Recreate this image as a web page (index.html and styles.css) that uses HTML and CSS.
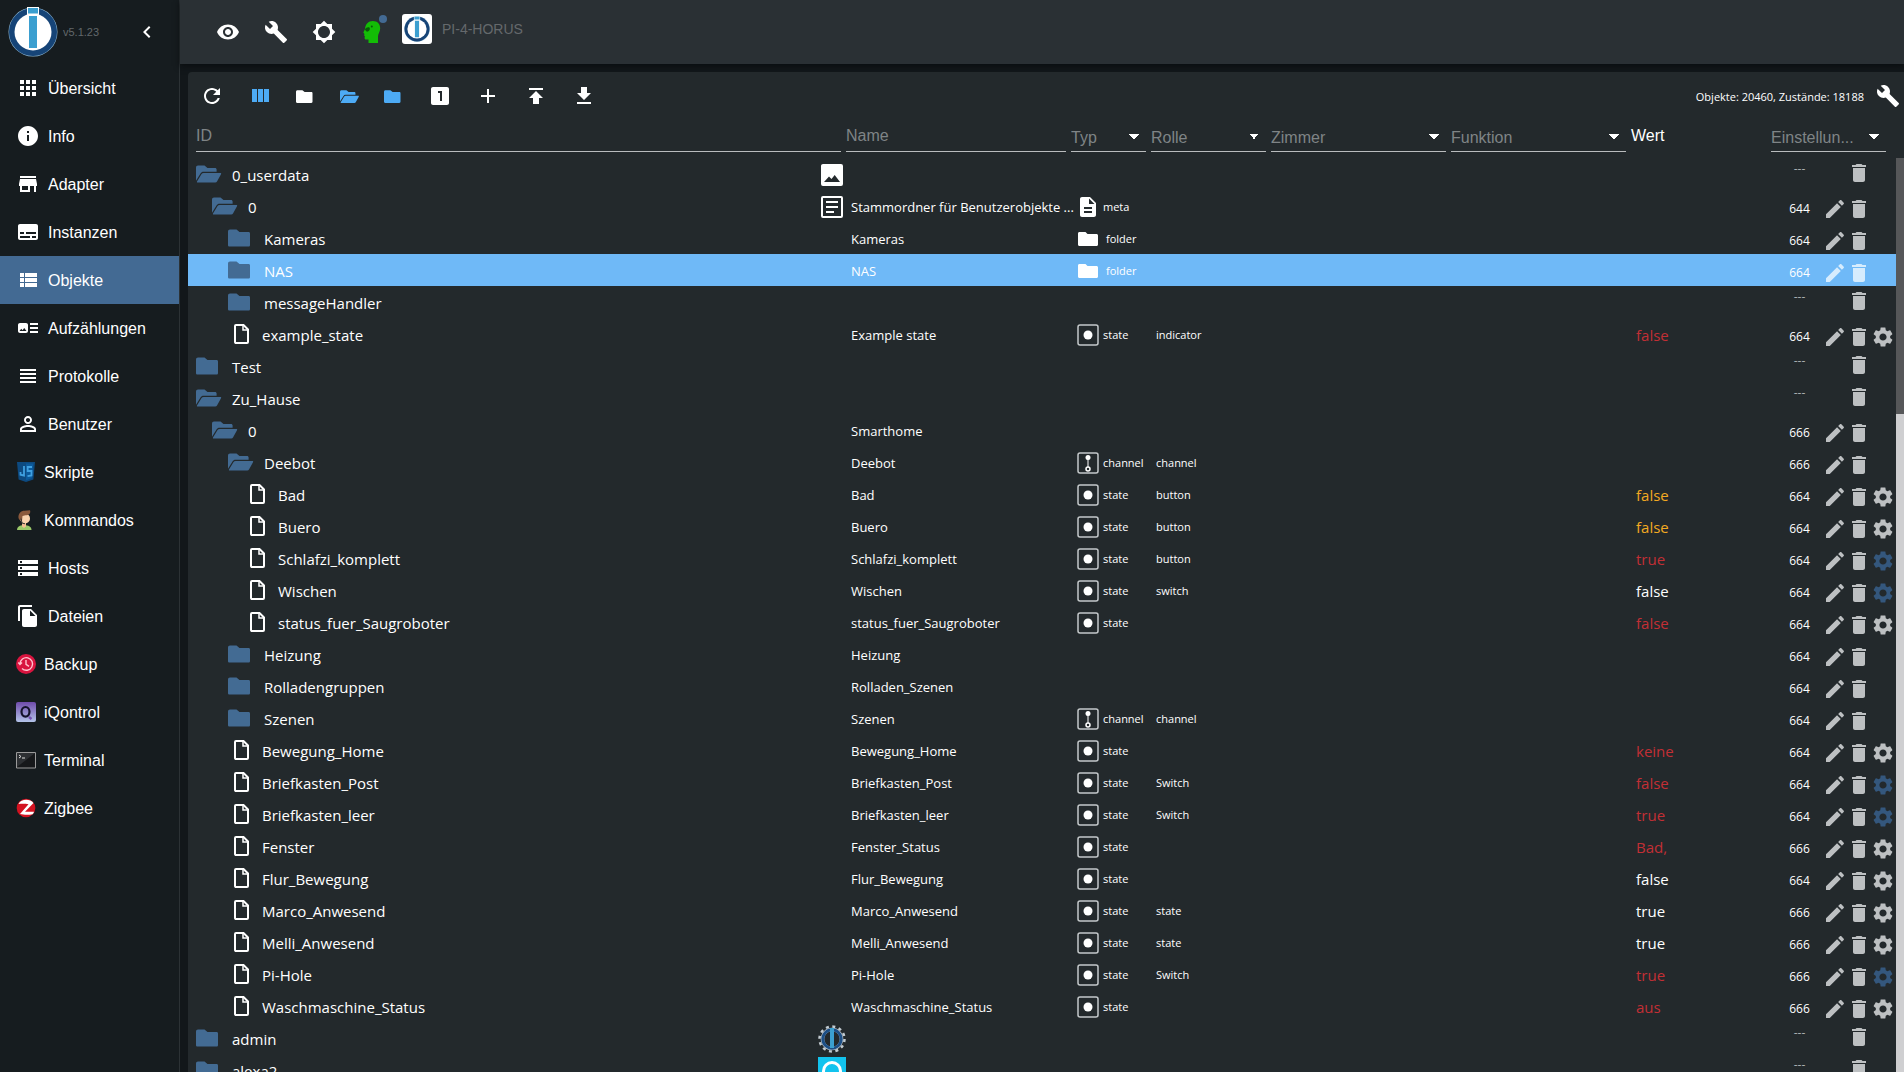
FILE: index.html
```html
<!DOCTYPE html>
<html lang="de">
<head>
<meta charset="utf-8">
<title>Objekte - ioBroker</title>
<link rel="stylesheet" href="styles.css">
</head>
<body>
<svg class="sprite" aria-hidden="true">
  <symbol id="logo" viewBox="0 0 50 50">
    <circle cx="25" cy="25" r="24.5" fill="#8fb6cf"/>
    <circle cx="25" cy="25" r="24" fill="#164477"/>
    <circle cx="25" cy="25" r="18.5" fill="#fff"/>
    <path d="M19 0h12v8H19z" fill="#fff"/>
    <path d="M20 1h10v5.500H20zM21 9h8v32h-8z" fill="#3b9fd0"/>
  </symbol>
  <symbol id="chevron" viewBox="0 0 24 24"><path d="M15.410 7.410L14 6l-6 6 6 6 1.410-1.410L10.830 12z"/></symbol>
  <symbol id="apps" viewBox="0 0 24 24"><path d="M4 8h4V4H4v4zm6 12h4v-4h-4v4zm-6 0h4v-4H4v4zm0-6h4v-4H4v4zm6 0h4v-4h-4v4zm6-10v4h4V4h-4zm-6 4h4V4h-4v4zm6 6h4v-4h-4v4zm0 6h4v-4h-4v4z"/></symbol>
  <symbol id="info" viewBox="0 0 24 24"><path d="M12 2C6.480 2 2 6.480 2 12s4.480 10 10 10 10-4.480 10-10S17.520 2 12 2zm1 15h-2v-6h2v6zm0-8h-2V7h2v2z"/></symbol>
  <symbol id="store" viewBox="0 0 24 24"><path d="M20 4H4v2h16V4zm1 10v-2l-1-5H4l-1 5v2h1v6h10v-6h4v6h2v-6h1zm-9 4H6v-4h6v4z"/></symbol>
  <symbol id="subtitles" viewBox="0 0 24 24"><path d="M20 4H4c-1.100 0-2 .9-2 2v12c0 1.100.9 2 2 2h16c1.100 0 2-.9 2-2V6c0-1.100-.9-2-2-2zM4 12h4v2H4v-2zm10 6H4v-2h10v2zm6 0h-4v-2h4v2zm0-4H10v-2h10v2z"/></symbol>
  <symbol id="viewlist" viewBox="0 0 24 24"><path d="M4 14h4v-4H4v4zm0 5h4v-4H4v4zM4 9h4V5H4v4zm5 5h12v-4H9v4zm0 5h12v-4H9v4zM9 5v4h12V5H9z"/></symbol>
  <symbol id="arttrack" viewBox="0 0 24 24"><path d="M22 13h-8v-2h8v2zm0-6h-8v2h8V7zm-8 10h8v-2h-8v2zm-2-8v6c0 1.100-.9 2-2 2H4c-1.100 0-2-.9-2-2V9c0-1.100.9-2 2-2h6c1.100 0 2 .9 2 2zm-1.500 6l-2.250-3-1.750 2.260-1.250-1.510L3.500 15h7z"/></symbol>
  <symbol id="headline" viewBox="0 0 24 24"><path d="M4 15h16v-2H4v2zm0 4h16v-2H4v2zm0-8h16V9H4v2zm0-6v2h16V5H4z"/></symbol>
  <symbol id="person" viewBox="0 0 24 24"><path d="M12 5.900c1.160 0 2.100.94 2.100 2.100s-.94 2.100-2.100 2.100S9.900 9.160 9.900 8s.94-2.100 2.100-2.100m0 9c2.970 0 6.100 1.460 6.100 2.100v1.100H5.900V17c0-.64 3.130-2.100 6.100-2.100M12 4C9.790 4 8 5.790 8 8s1.790 4 4 4 4-1.790 4-4-1.790-4-4-4zm0 9c-2.670 0-8 1.340-8 4v3h16v-3c0-2.660-5.330-4-8-4z"/></symbol>
  <symbol id="storage" viewBox="0 0 24 24"><path d="M2 20h20v-4H2v4zm2-3h2v2H4v-2zM2 4v4h20V4H2zm4 3H4V5h2v2zm-4 7h20v-4H2v4zm2-3h2v2H4v-2z"/></symbol>
  <symbol id="copy" viewBox="0 0 24 24"><path d="M16 1H4c-1.100 0-2 .9-2 2v14h2V3h12V1zm-1 4l6 6v10c0 1.100-.9 2-2 2H7.990C6.890 23 6 22.100 6 21l.01-14c0-1.100.89-2 1.990-2h7zm-1 7h5.500L14 6.500V12z"/></symbol>
  <symbol id="eye" viewBox="0 0 24 24"><path d="M12 4.500C7 4.500 2.730 7.610 1 12c1.730 4.390 6 7.500 11 7.500s9.270-3.110 11-7.500c-1.730-4.390-6-7.500-11-7.500zM12 17c-2.760 0-5-2.240-5-5s2.240-5 5-5 5 2.240 5 5-2.240 5-5 5zm0-8c-1.660 0-3 1.340-3 3s1.340 3 3 3 3-1.340 3-3-1.340-3-3-3z"/></symbol>
  <symbol id="wrench" viewBox="0 0 24 24"><path d="M22.700 19l-9.100-9.100c.9-2.300.4-5-1.500-6.900-2-2-5-2.400-7.400-1.300L9 6 6 9 1.600 4.700C.4 7.100.9 10.100 2.900 12.100c1.900 1.900 4.600 2.400 6.900 1.500l9.100 9.100c.4.4 1 .4 1.400 0l2.300-2.300c.5-.4.5-1.100.1-1.400z"/></symbol>
  <symbol id="sun" viewBox="0 0 24 24"><path d="M20 15.310L23.310 12 20 8.690V4h-4.690L12 .69 8.690 4H4v4.690L.69 12 4 15.310V20h4.690L12 23.310 15.310 20H20v-4.690zM12 18c-3.310 0-6-2.690-6-6s2.690-6 6-6 6 2.690 6 6-2.690 6-6 6z"/></symbol>
  <symbol id="head" viewBox="0 0 24 24"><path d="M5.500 23v-3.500H3c-1 0-1.500-.6-1.400-1.500l.3-2-.9-.6.5-1.400L.3 12.500 2 9C2.400 4 5.300 1 9.800 1c4.400 0 7.400 2.800 7.400 7.300 0 3.200-2 5.200-2.200 8V23z" fill="#13bd06"/><path d="M1.900 9.300c1.300-1.800 3.300-2.600 4.800-1.500.6 1.500-.4 3.300-2 3.800-1 .2-2-.4-2.800-2.300z" fill="#0a5a0a"/><circle cx="8.800" cy="6.600" r="1" fill="#0a5a0a"/></symbol>
  <symbol id="refresh" viewBox="0 0 24 24"><path d="M17.650 6.350C16.200 4.900 14.210 4 12 4c-4.420 0-7.990 3.580-7.990 8s3.570 8 7.990 8c3.730 0 6.840-2.550 7.730-6h-2.080c-.82 2.330-3.040 4-5.650 4-3.310 0-6-2.690-6-6s2.690-6 6-6c1.660 0 3.140.69 4.220 1.780L13 11h7V4l-2.350 2.350z"/></symbol>
  <symbol id="columns" viewBox="0 0 24 24"><path d="M10 18h5V5h-5v13zm-6 0h5V5H4v13zM16 5v13h5V5h-5z"/></symbol>
  <symbol id="one" viewBox="0 0 24 24"><path d="M19 3H5c-1.100 0-2 .9-2 2v14c0 1.100.9 2 2 2h14c1.100 0 2-.9 2-2V5c0-1.100-.9-2-2-2zm-5 14h-2V9h-2V7h4v10z"/></symbol>
  <symbol id="add" viewBox="0 0 24 24"><path d="M19 13h-6v6h-2v-6H5v-2h6V5h2v6h6v2z"/></symbol>
  <symbol id="upload" viewBox="0 0 24 24"><path d="M5 4v2h14V4H5zm0 10h4v6h6v-6h4l-7-7-7 7z"/></symbol>
  <symbol id="download" viewBox="0 0 24 24"><path d="M19 9h-4V3H9v6H5l7 7 7-7zM5 18v2h14v-2H5z"/></symbol>
  <symbol id="gear" viewBox="0 0 24 24"><path d="M19.140 12.940c.04-.3.06-.61.06-.94 0-.32-.02-.64-.07-.94l2.030-1.580c.18-.14.23-.41.12-.61l-1.920-3.320c-.12-.22-.37-.29-.59-.22l-2.390.96c-.5-.38-1.030-.7-1.620-.94l-.36-2.540c-.04-.24-.24-.41-.48-.41h-3.840c-.24 0-.43.17-.47.41l-.36 2.540c-.59.24-1.130.57-1.620.94l-2.390-.96c-.22-.08-.47 0-.59.22L2.740 8.870c-.12.21-.08.47.12.61l2.030 1.580c-.05.3-.09.63-.09.94s.02.64.07.94l-2.030 1.580c-.18.14-.23.41-.12.61l1.920 3.320c.12.22.37.29.59.22l2.390-.96c.5.38 1.030.7 1.620.94l.36 2.540c.05.24.24.41.48.41h3.840c.24 0 .44-.17.47-.41l.36-2.540c.59-.24 1.130-.56 1.620-.94l2.390.96c.22.08.47 0 .59-.22l1.920-3.320c.12-.22.07-.47-.12-.61l-2.010-1.580zM12 15.600c-1.980 0-3.600-1.620-3.600-3.600s1.620-3.600 3.600-3.600 3.600 1.620 3.600 3.600-1.620 3.600-3.600 3.600z"/></symbol>
  <symbol id="trash" viewBox="0 0 24 24"><path d="M6 19c0 1.100.9 2 2 2h8c1.100 0 2-.9 2-2V7H6v12zM19 4h-3.500l-1-1h-5l-1 1H5v2h14V4z"/></symbol>
  <symbol id="edit" viewBox="0 0 24 24"><path d="M3 17.250V21h3.750L17.810 9.940l-3.750-3.750L3 17.250zM20.710 7.040c.39-.39.39-1.020 0-1.410l-2.340-2.340c-.39-.39-1.020-.39-1.410 0l-1.830 1.830 3.750 3.750 1.830-1.830z"/></symbol>
  <symbol id="closed" viewBox="0 0 28 20"><path d="M2 1.500h6.500l3 2.500H20.500c1 0 1.500.6 1.500 1.500v11.500c0 1-.6 1.500-1.500 1.500H1.500C.6 18.500 0 18 0 17V3.500c0-1.200.8-2 2-2z"/></symbol>
  <symbol id="open" viewBox="0 0 28 20"><path d="M2 1.500h6.500l3 2.500h7.500c1 0 1.600.7 1.600 1.600V7.800H7.500c-1.300 0-2.300.6-3 1.800L0 16.800V3.500c0-1.200.8-2 2-2z"/><path d="M7.700 9H24.400c.7 0 1 .6.6 1.200l-4 7.300c-.4.700-.9 1-1.700 1H1.600c-.6 0-.9-.4-.6-1l4.400-7.300c.5-.8 1.300-1.200 2.300-1.200z"/></symbol>
  <symbol id="file" viewBox="0 0 28 20"><path d="M8 1h7.500l4.500 4.500V18c0 .6-.4 1-1 1H8c-.6 0-1-.4-1-1V2c0-.6.4-1 1-1z" fill="none" stroke="currentColor" stroke-width="2"/><path d="M15 1v5h5" fill="none" stroke="currentColor" stroke-width="1.500"/></symbol>
  <symbol id="photo" viewBox="0 0 28 28"><path d="M5 3h18a2 2 0 0 1 2 2v18a2 2 0 0 1-2 2H5a2 2 0 0 1-2-2V5c0-1.100.9-2 2-2zm1 18h16l-5.300-7-3.200 4-2.500-2.500z" fill-rule="evenodd"/></symbol>
  <symbol id="article" viewBox="0 0 28 28"><path d="M5 4h18a1 1 0 0 1 1 1v18a1 1 0 0 1-1 1H5a1 1 0 0 1-1-1V5a1 1 0 0 1 1-1z" fill="none" stroke="currentColor" stroke-width="2"/><path d="M8 8h12v2H8zm0 5h12v2H8zm0 5h8v2H8z"/></symbol>
  <symbol id="admin" viewBox="0 0 28 28"><circle cx="14" cy="14" r="12.500" fill="none" stroke="#c3ccd2" stroke-width="2.500" stroke-dasharray="3 3.540"/><circle cx="14" cy="14" r="9.500" fill="#23292c" stroke="#c3ccd2" stroke-width="3.500"/><circle cx="14" cy="14" r="9.200" fill="none" stroke="#1d4f86" stroke-width="3"/><path d="M12 3h4v20h-4z" fill="#3b9fd0"/></symbol>
  <symbol id="alexa" viewBox="0 0 28 28"><path d="M0 0h28v28H0z" fill="#12c3ee"/><circle cx="14" cy="14" r="8.500" fill="none" stroke="#fff" stroke-width="3"/></symbol>
  <symbol id="meta" viewBox="0 0 24 24"><path d="M14 2H6c-1.100 0-1.990.9-1.990 2L4 20c0 1.100.89 2 1.990 2H18c1.100 0 2-.9 2-2V8l-6-6zm2 16H8v-2h8v2zm0-4H8v-2h8v2zm-3-5V3.500L18.500 9H13z"/></symbol>
  <symbol id="folder" viewBox="0 0 24 24"><path d="M3.500 5h6l2 2h9c.8 0 1.500.6 1.500 1.500v9c0 .9-.6 1.500-1.500 1.500h-17c-.9 0-1.500-.6-1.500-1.500v-11C2 5.600 2.600 5 3.500 5z"/></symbol>
  <symbol id="state" viewBox="0 0 24 24"><rect x="2" y="2" width="20" height="20" rx="2" fill="none" stroke="#c4c8ca" stroke-width="1.500"/><circle cx="12" cy="12" r="4.500"/></symbol>
  <symbol id="channel" viewBox="0 0 24 24"><rect x="2" y="2" width="20" height="20" rx="2" fill="none" stroke="#c4c8ca" stroke-width="1.500"/><circle cx="12" cy="6.500" r="2.500"/><path d="M11.500 8h1v8h-1z"/><circle cx="12" cy="18" r="2" fill="none" stroke="currentColor" stroke-width="1.500"/></symbol>
</svg>

<div class="app">
  <nav class="side">
    <header class="brand">
      <svg class="brand-logo"><use href="#logo"/></svg>
      <span class="version">v5.1.23</span>
      <button class="collapse" aria-label="Menü einklappen"><svg class="i24"><use href="#chevron"/></svg></button>
    </header>
    <a class="item" href="#overview"><svg class="i24"><use href="#apps"/></svg>Übersicht</a>
    <a class="item" href="#info-page"><svg class="i24"><use href="#info"/></svg>Info</a>
    <a class="item" href="#adapters"><svg class="i24"><use href="#store"/></svg>Adapter</a>
    <a class="item" href="#instances"><svg class="i24"><use href="#subtitles"/></svg>Instanzen</a>
    <a class="item active" href="#objects" aria-current="page"><svg class="i24"><use href="#viewlist"/></svg>Objekte</a>
    <a class="item" href="#enums"><svg class="i24"><use href="#arttrack"/></svg>Aufzählungen</a>
    <a class="item" href="#logs"><svg class="i24"><use href="#headline"/></svg>Protokolle</a>
    <a class="item" href="#users"><svg class="i24"><use href="#person"/></svg>Benutzer</a>
    <a class="item" href="#scripts"><svg class="i20" viewBox="0 0 20 20"><path d="M1 0h18l-1.600 17.500L10 20l-7.400-2.500z" fill="#0d4a80"/><path d="M10 1.500h7.300l-1.400 14.800L10 18.200z" fill="#0b5a9c"/><path d="M8 4v9.500l-3.500-.8V10M16 5h-4.300v4h3.800v4.500l-4 .6" fill="none" stroke="#3fa0e0" stroke-width="1.800"/></svg>Skripte</a>
    <a class="item" href="#commands"><svg class="i20" viewBox="0 0 20 20"><path d="M1 20c0-3 2-4.500 5-4.800h4c3 .3 5.500 1.800 5.500 4.800z" fill="#9bc96a"/><path d="M6 12h4v4.500l-2 1.500-2-1.500z" fill="#f3bd93"/><circle cx="9" cy="8.500" r="5" fill="#fbd3ae"/><path d="M2.500 8C2 3.500 5 .8 8.500.8L14 .3c1 3-1 5-4.500 5L6.500 6 6 11c-2-.3-3-1.500-3.500-3z" fill="#8c5a3c"/><path d="M5 8.500l1 4.500 3 .8" fill="none" stroke="#333" stroke-width="1"/></svg>Kommandos</a>
    <a class="item" href="#hosts"><svg class="i24"><use href="#storage"/></svg>Hosts</a>
    <a class="item" href="#files"><svg class="i24"><use href="#copy"/></svg>Dateien</a>
    <a class="item" href="#backup"><svg class="i20" viewBox="0 0 20 20"><circle cx="10" cy="10" r="10" fill="#d9143f"/><path d="M4 10a6.300 6.300 0 1 1 2 4.600M10 6v4.300l3 2M2.300 8.500L4 10.500l2-2" fill="none" stroke="#ffc4cf" stroke-width="1.400"/></svg>Backup</a>
    <a class="item" href="#iqontrol"><svg class="i20" viewBox="0 0 20 20"><defs><linearGradient id="violet" x2="0" y2="1"><stop stop-color="#6f4bab"/><stop offset="1" stop-color="#b3c3e8"/></linearGradient></defs><rect width="20" height="20" rx="2" fill="url(#violet)"/><ellipse cx="9.500" cy="9.800" rx="4" ry="4.800" fill="none" stroke="#14122b" stroke-width="2.200"/><path d="M13 15l2.500 2" stroke="#7450b0" stroke-width="2.500"/></svg>iQontrol</a>
    <a class="item" href="#terminal"><svg class="i20" viewBox="0 0 20 20"><path d="M.5 2.500h19v15.500H.5z" fill="#16181a" stroke="#9a9a9a"/><path d="M1 17V3h18z" fill="#2d3033"/><path d="M3 5l2 1.500L3 8M6 8h3" fill="none" stroke="#ddd" stroke-width="1"/></svg>Terminal</a>
    <a class="item" href="#zigbee"><svg class="i20" viewBox="0 0 20 20"><circle cx="10" cy="10" r="9.300" fill="#d31220"/><path d="M2.500 6C5 .8 14 .5 17.500 5L9 13.800h9c-.5 1.500-1 2-1.500 2.500-4 .8-9 .6-12.500-.3L12.500 6.200C9 5.600 6 5.600 2.500 6z" fill="#fff"/></svg>Zigbee</a>
  </nav>

  <div class="content">
    <header class="topbar">
      <button class="tool" aria-label="Experten-Ansicht"><svg class="i24"><use href="#eye"/></svg></button>
      <button class="tool" aria-label="Systemeinstellungen"><svg class="i24"><use href="#wrench"/></svg></button>
      <button class="tool" aria-label="Farbschema"><svg class="i24"><use href="#sun"/></svg></button>
      <button class="expert" aria-label="Expertenmodus"><svg class="i24"><use href="#head"/></svg><span class="badge"></span></button>
      <a class="host" href="#host"><span class="host-logo"><svg class="host-mark"><use href="#logo"/></svg></span>PI-4-HORUS</a>
    </header>

    <main class="panel">
      <div class="toolbar">
        <button class="tool" aria-label="Aktualisieren"><svg class="i24"><use href="#refresh"/></svg></button>
        <button class="tool blue" aria-label="Spalten"><svg class="i24"><use href="#columns"/></svg></button>
        <button class="tool small" aria-label="Alles zuklappen"><svg class="fold"><use href="#closed"/></svg></button>
        <button class="tool small blue" aria-label="Ebene öffnen"><svg class="fold"><use href="#open"/></svg></button>
        <button class="tool small blue" aria-label="Ebene schließen"><svg class="fold"><use href="#closed"/></svg></button>
        <button class="tool" aria-label="Zustände anzeigen"><svg class="i24"><use href="#one"/></svg></button>
        <button class="tool" aria-label="Objekt hinzufügen"><svg class="i24"><use href="#add"/></svg></button>
        <button class="tool" aria-label="Hochladen"><svg class="i24"><use href="#upload"/></svg></button>
        <button class="tool" aria-label="Herunterladen"><svg class="i24"><use href="#download"/></svg></button>
        <span class="count">Objekte: 20460, Zustände: 18188</span>
        <button class="tool edge" aria-label="Ansicht anpassen"><svg class="i24"><use href="#wrench"/></svg></button>
      </div>
      <div class="browser">
        <table class="objects">
          <colgroup><col><col class="w-name"><col class="w-type"><col class="w-role"><col class="w-enum"><col class="w-enum"><col class="w-value"><col class="w-set"></colgroup>
          <thead>
            <tr>
              <th class="first"><input class="filter" aria-label="ID" placeholder="ID"></th>
              <th><input class="filter" aria-label="Name" placeholder="Name"></th>
              <th><select class="filter" aria-label="Typ"><option>Typ</option></select></th>
              <th><select class="filter" aria-label="Rolle"><option>Rolle</option></select></th>
              <th><select class="filter" aria-label="Zimmer"><option>Zimmer</option></select></th>
              <th><select class="filter" aria-label="Funktion"><option>Funktion</option></select></th>
              <th class="plain">Wert</th>
              <th class="last"><select class="filter" aria-label="Einstellungen"><option>Einstellun...</option></select></th>
            </tr>
          </thead>
          <tbody id="rows"></tbody>
        </table>
        <div class="scroll"><div class="thumb"></div></div>
      </div>
    </main>
  </div>
</div>
<script src="objects.js"></script>
</body>
</html>
```
FILE: objects.js
```js
// depth, kind, id, name, type, role, value, value state, rights, gear, image
const objects = [
  [0, 'open', '0_userdata', '', '', '', '', '', '', '', 'photo'],
  [1, 'open', '0', 'Stammordner für Benutzerobjekte ...', 'meta', '', '', '', '644', '', 'article'],
  [2, 'closed', 'Kameras', 'Kameras', 'folder', '', '', '', '664'],
  [2, 'closed', 'NAS', 'NAS', 'folder', '', '', '', '664'],
  [2, 'closed', 'messageHandler'],
  [2, 'file', 'example_state', 'Example state', 'state', 'indicator', 'false', 'red', '664', 'on'],
  [0, 'closed', 'Test'],
  [0, 'open', 'Zu_Hause'],
  [1, 'open', '0', 'Smarthome', '', '', '', '', '666'],
  [2, 'open', 'Deebot', 'Deebot', 'channel', 'channel', '', '', '666'],
  [3, 'file', 'Bad', 'Bad', 'state', 'button', 'false', 'orange', '664', 'on'],
  [3, 'file', 'Buero', 'Buero', 'state', 'button', 'false', 'orange', '664', 'on'],
  [3, 'file', 'Schlafzi_komplett', 'Schlafzi_komplett', 'state', 'button', 'true', 'red', '664', 'custom'],
  [3, 'file', 'Wischen', 'Wischen', 'state', 'switch', 'false', '', '664', 'custom'],
  [3, 'file', 'status_fuer_Saugroboter', 'status_fuer_Saugroboter', 'state', '', 'false', 'red', '664', 'on'],
  [2, 'closed', 'Heizung', 'Heizung', '', '', '', '', '664'],
  [2, 'closed', 'Rolladengruppen', 'Rolladen_Szenen', '', '', '', '', '664'],
  [2, 'closed', 'Szenen', 'Szenen', 'channel', 'channel', '', '', '664'],
  [2, 'file', 'Bewegung_Home', 'Bewegung_Home', 'state', '', 'keine', 'red', '664', 'on'],
  [2, 'file', 'Briefkasten_Post', 'Briefkasten_Post', 'state', 'Switch', 'false', 'red', '664', 'custom'],
  [2, 'file', 'Briefkasten_leer', 'Briefkasten_leer', 'state', 'Switch', 'true', 'red', '664', 'custom'],
  [2, 'file', 'Fenster', 'Fenster_Status', 'state', '', 'Bad,', 'red', '666', 'on'],
  [2, 'file', 'Flur_Bewegung', 'Flur_Bewegung', 'state', '', 'false', '', '664', 'on'],
  [2, 'file', 'Marco_Anwesend', 'Marco_Anwesend', 'state', 'state', 'true', '', '666', 'on'],
  [2, 'file', 'Melli_Anwesend', 'Melli_Anwesend', 'state', 'state', 'true', '', '666', 'on'],
  [2, 'file', 'Pi-Hole', 'Pi-Hole', 'state', 'Switch', 'true', 'red', '666', 'custom'],
  [2, 'file', 'Waschmaschine_Status', 'Waschmaschine_Status', 'state', '', 'aus', 'red', '666', 'on'],
  [0, 'closed', 'admin', '', '', '', '', '', '', '', 'admin'],
  [0, 'closed', 'alexa2', '', '', '', '', '', '', '', 'alexa']
];

const icon = (name, cls) => `<svg class="${cls}"><use href="#${name}"/></svg>`;
const action = (name, label, cls) =>
  `<button class="act ${cls}" aria-label="${label}">${icon(name, 'i24')}</button>`;

document.getElementById('rows').innerHTML = objects.map(row => {
  const [depth, kind, id, name = '', type = '', role = '', value = '', state = '', rights = '', gear = '', image = ''] = row;
  return `<tr${id === 'NAS' ? ' class="selected"' : ''}>
    <td><div class="id depth-${depth} ${kind}">${icon(kind, 'node')}<span>${id}</span>${image ? icon(image, 'image') : ''}</div></td>
    <td class="name">${name}</td>
    <td><div class="type ${type}">${type ? icon(type, 'i24') + type : ''}</div></td>
    <td class="role">${role}</td><td></td><td></td>
    <td class="value ${state}">${value}</td>
    <td><div class="settings ${rights ? 'full' : ''}"><span class="rights">${rights || '---'}</span>
      ${rights ? action('edit', 'Bearbeiten', 'a-edit') : ''}${action('trash', 'Löschen', 'a-trash')}${gear ? action('gear', 'Konfiguration', 'a-gear ' + gear) : ''}</div></td>
  </tr>`;
}).join('');
```
FILE: styles.css
```css
* { box-sizing: border-box; }

body {
  margin: 0;
  background: #12171a;
  color: #fff;
  font: 16px/24px "Liberation Sans", Arial, sans-serif;
}

svg { display: block; flex: none; fill: currentColor; }
.sprite { position: absolute; width: 0; height: 0; }
.i24 { width: 24px; height: 24px; }
.i20 { width: 20px; height: 20px; }

button {
  display: flex;
  align-items: center;
  justify-content: center;
  margin: 0;
  padding: 0;
  border: 0;
  background: none;
  color: inherit;
  cursor: pointer;
}

a { color: inherit; text-decoration: none; }

.app { display: flex; height: 100vh; overflow: hidden; }

/* Sidebar */
.side {
  flex: none;
  width: 180px;
  background: #161c1f;
  border-right: 1px solid #2c3235;
}
.brand { display: flex; align-items: center; height: 64px; padding: 0 8px; }
.brand-logo { width: 50px; height: 50px; }
.version { margin-left: 5px; color: #62686b; font-size: 11px; }
.collapse { width: 48px; height: 48px; margin-left: auto; }
.item { display: flex; align-items: center; gap: 8px; height: 48px; padding: 2px 16px 0; }
.item svg { margin-bottom: 2px; }
.active { background: #436a93; }

/* Top bar */
.content { display: flex; flex-direction: column; flex: 1; min-width: 0; }
.topbar {
  display: flex;
  align-items: center;
  flex: none;
  height: 64px;
  padding-left: 24px;
  background: #2a3034;
  box-shadow: 0 2px 6px #0a0d0f;
}
.tool { flex: none; width: 48px; height: 48px; }
.expert { position: relative; width: 54px; height: 48px; }
.badge {
  position: absolute;
  top: 7px;
  right: 15px;
  width: 8px;
  height: 8px;
  border-radius: 50%;
  background: #436a93;
}
.host { display: flex; align-items: center; gap: 10px; height: 30px; margin-bottom: 6px; color: #65696c; font-size: 14px; }
.host-logo { display: flex; align-items: center; justify-content: center; width: 30px; height: 30px; border-radius: 3px; background: #fff; }
.host-mark { width: 26px; height: 26px; }

/* Object browser */
.panel {
  display: flex;
  flex-direction: column;
  flex: 1;
  min-height: 0;
  margin: 8px 0 0 8px;
  border-radius: 4px 0 0;
  background: #23292c;
  font-family: "Open Sans", "Noto Sans", sans-serif;
}
.toolbar { display: flex; align-items: center; flex: none; height: 48px; }
.blue { color: #4dabf5; }
.small { width: 44px; }
.fold { width: 21px; height: 15px; }
.count { margin-left: auto; margin-right: 8px; padding-top: 2px; font-size: 11px; }
.edge { width: 32px; }

.browser { display: flex; flex: 1; min-height: 0; overflow: hidden; }
.objects { width: 100%; height: max-content; table-layout: fixed; border-collapse: collapse; }
.w-name { width: 225px; }
.w-type { width: 80px; }
.w-role { width: 120px; }
.w-enum { width: 180px; }
.w-value { width: 140px; }
.w-set { width: 125px; }

th { height: 38px; padding: 0 5px 0 0; vertical-align: top; text-align: left; font-weight: 400; }
th.first { padding-left: 8px; }
th.last { padding-right: 10px; }
.filter {
  display: block;
  width: 100%;
  height: 32px;
  padding: 0;
  border: 0;
  border-bottom: 1px solid #b9bcbe;
  border-radius: 0;
  background: transparent;
  color: #7f8486;
  font: 16px "Liberation Sans", Arial, sans-serif;
  appearance: none;
}
.filter::placeholder { color: #7f8486; opacity: 1; }
select.filter {
  padding-top: 4px;
  background: conic-gradient(from -45deg at 50% 100%, #fff 90deg, transparent 0) right 7px top 14px / 10px 5px no-repeat;
}
.plain { font-family: "Liberation Sans", Arial, sans-serif; line-height: 32px; }

td { height: 32px; padding: 0; white-space: nowrap; line-height: 24px; }
.selected { background: #6fb9f7; }
.id { display: flex; align-items: center; gap: 8px; height: 32px; padding: 2px 0 0 8px; font-size: 15px; }
.depth-1 { padding-left: 24px; }
.depth-2 { padding-left: 40px; }
.depth-3 { padding-left: 56px; }
.node { width: 28px; height: 20px; margin-bottom: 2px; color: #436b93; }
.file { gap: 6px; }
.file .node { color: #fff; }
.image { width: 28px; height: 28px; margin-left: auto; }
.name { padding: 2px 0 0 5px; font-size: 13px; }
.type { display: flex; align-items: center; gap: 3px; padding: 2px 0 0 5px; font-size: 11px; }
.folder { gap: 6px; }
.role { padding: 2px 0 0 5px; font-size: 11px; }
.value { padding: 2px 0 0 5px; font-size: 15px; }
.red { color: #c22f35; }
.orange { color: #f3aa22; }

.settings { display: grid; grid-template-columns: 52px 24px 24px 24px; align-items: start; height: 26px; font-size: 12px; }
.full { height: 30px; padding-top: 6px; }
.rights { padding: 2px 0 0 5px; text-align: center; line-height: 12px; color: #a9adaf; }
.full .rights { padding-top: 0; line-height: 24px; color: #fff; }
.act { width: 24px; height: 24px; color: #bdc0c2; }
.selected .act { color: #d6ecfd; }
.a-edit { grid-column: 2; }
.a-trash { grid-column: 3; }
.a-gear { grid-column: 4; }
.act.custom { color: #34577d; }

.scroll { flex: none; width: 8px; margin-top: 38px; background: #cfcfd1; }
.thumb { height: 28%; background: #565759; }
```
